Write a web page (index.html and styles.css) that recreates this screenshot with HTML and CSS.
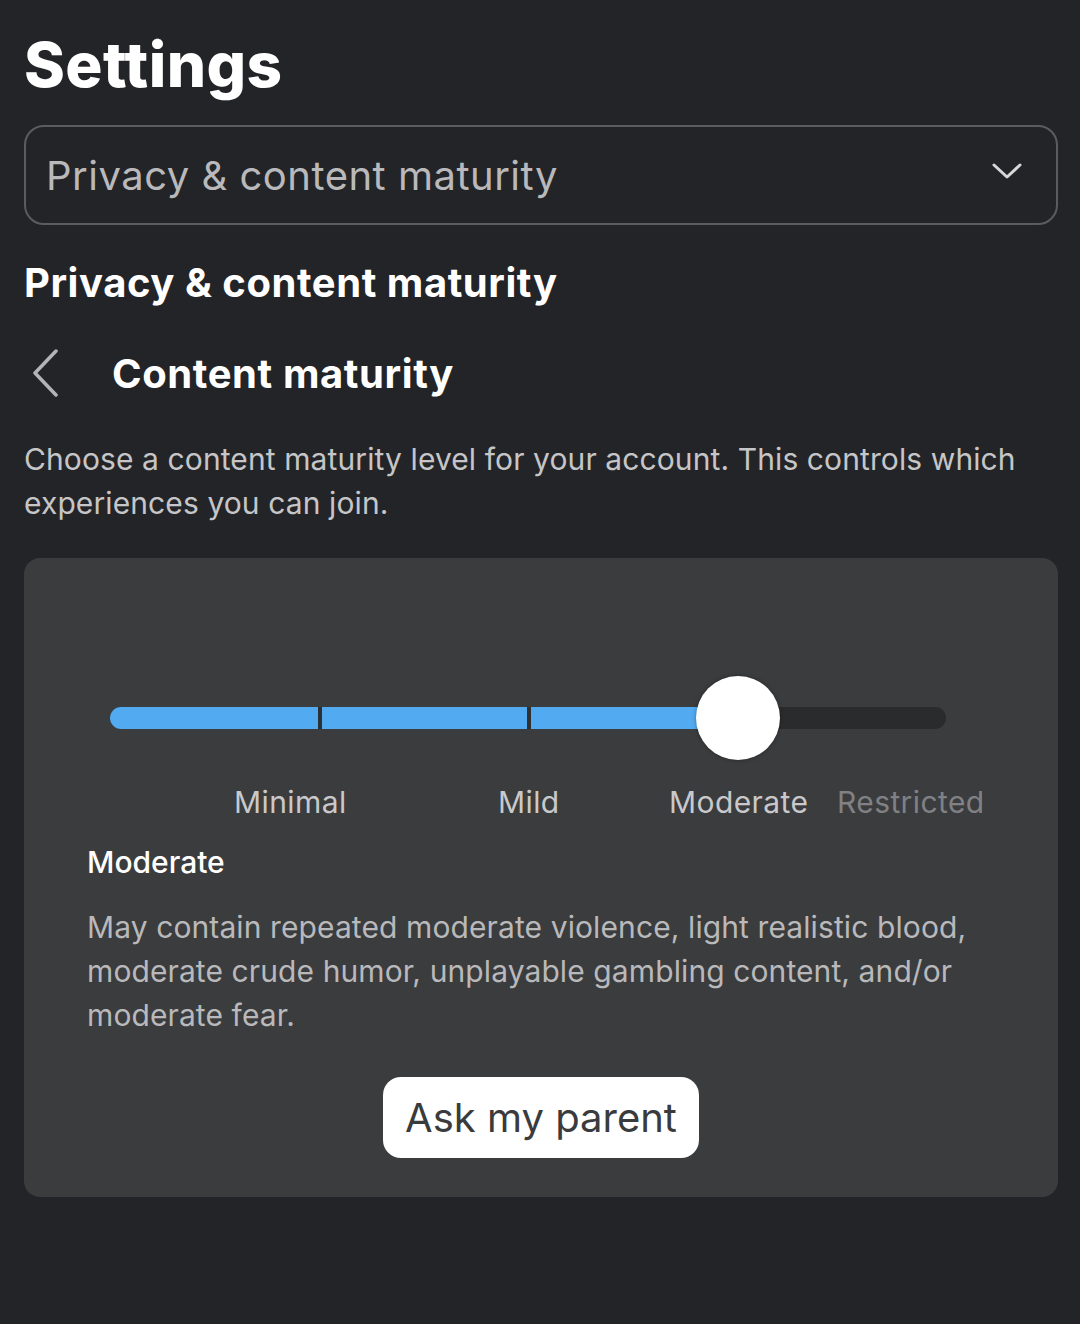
FILE: index.html
```html
<!DOCTYPE html>
<html lang="en">
<head>
  <meta charset="UTF-8">
  <meta name="viewport" content="width=device-width, initial-scale=1.0">
  <title>Settings</title>
  <link rel="stylesheet" href="styles.css">
</head>
<body>
  <div class="page">
    <h1 class="title">Settings</h1>

    <!-- Section picker -->
    <div class="picker">
      <span class="picker-text">Privacy &amp; content maturity</span>
      <svg class="picker-arrow" width="30" height="18" viewBox="0 0 30 18">
        <path d="M2 3 L15 15 L28 3" fill="none" stroke="#d8d8d8" stroke-width="3" stroke-linecap="round" stroke-linejoin="round"/>
      </svg>
    </div>

    <h2 class="section-title">Privacy &amp; content maturity</h2>

    <div class="subheader">
      <svg class="back" width="30" height="48" viewBox="0 0 30 48">
        <path d="M26 2 L5 24 L26 46" fill="none" stroke="#b4b4b6" stroke-width="3.5" stroke-linecap="round" stroke-linejoin="round"/>
      </svg>
      <h3 class="subheader-title">Content maturity</h3>
    </div>

    <p class="intro">Choose a content maturity level for your account. This controls which experiences you can join.</p>

    <!-- Maturity level card -->
    <div class="card">
      <div class="slider">
        <div class="track">
          <div class="fill"></div>
          <span class="tick" style="left: 208px"></span>
          <span class="tick" style="left: 417px"></span>
          <span class="thumb" style="left: 628px"></span>
        </div>
        <div class="labels">
          <span class="label" style="left: 124px">Minimal</span>
          <span class="label" style="left: 388px">Mild</span>
          <span class="label" style="left: 559px">Moderate</span>
          <span class="label muted" style="left: 727px">Restricted</span>
        </div>
      </div>

      <h4 class="level-name">Moderate</h4>
      <p class="level-desc">May contain repeated moderate violence, light realistic blood, moderate crude humor, unplayable gambling content, and/or moderate fear.</p>

      <div class="actions">
        <button class="ask-btn">Ask my parent</button>
      </div>
    </div>
  </div>
</body>
</html>
```

FILE: styles.css
```css
body {
  margin: 0;
  background-color: #232427;
  font-family: Inter, "Noto Sans", sans-serif;
  color: #ffffff;
}

.page {
  padding: 0 22px 0 24px;
}

.title {
  margin: 0;
  padding-top: 27px;
  font-size: 62px;
  font-weight: 800;
  line-height: 76px;
  letter-spacing: 0.4px;
}

.picker {
  margin-top: 22px;
  height: 96px;
  border: 2px solid #5b5c60;
  border-radius: 20px;
  display: flex;
  align-items: center;
  justify-content: space-between;
  padding: 0 34px 0 20px;
}

.picker-text {
  font-size: 40px;
  color: #b9b9bb;
  letter-spacing: 0.5px;
}

.picker-arrow {
  margin-top: -8px;
}

.section-title {
  margin: 32px 0 0;
  font-size: 40px;
  font-weight: 700;
  line-height: 52px;
  letter-spacing: 0.55px;
}

.subheader {
  display: flex;
  align-items: center;
  margin-top: 40px;
  height: 48px;
}

.back {
  margin-left: 6px;
}

.subheader-title {
  margin: 0 0 0 52px;
  font-size: 40px;
  font-weight: 700;
  letter-spacing: 0.6px;
}

.intro {
  margin: 40px 0 0;
  font-size: 30px;
  line-height: 44px;
  color: #c6c6c8;
  letter-spacing: 0.1px;
}

.card {
  margin-top: 33px;
  background-color: #3b3c3e;
  border-radius: 16px;
  padding: 118px 63px 39px;
}

.slider {
  position: relative;
  margin-left: 23px;
  width: 836px;
}

.track {
  position: relative;
  margin-top: 31px;
  height: 22px;
  border-radius: 11px;
  background-color: #2a2b2d;
}

.fill {
  width: 640px;
  height: 100%;
  border-radius: 11px 0 0 11px;
  background-color: #52aaf1;
}

.tick {
  position: absolute;
  top: 0;
  width: 4px;
  height: 100%;
  background-color: #2f3033;
}

.thumb {
  position: absolute;
  top: -31px;
  width: 84px;
  height: 84px;
  margin-left: -42px;
  border-radius: 50%;
  background-color: #ffffff;
  box-shadow: 0 0 4px rgba(0, 0, 0, 0.35);
}

.labels {
  position: relative;
  height: 44px;
  margin-top: 51px;
}

.label {
  position: absolute;
  top: 0;
  font-size: 30px;
  line-height: 44px;
  color: #c9c9cb;
  white-space: nowrap;
  letter-spacing: 0.4px;
}

.label.muted {
  color: #808184;
}

.level-name {
  margin: 16px 0 0;
  font-size: 30px;
  font-weight: 500;
  line-height: 44px;
}

.level-desc {
  margin: 21px 0 0;
  font-size: 30px;
  line-height: 44px;
  color: #b9b9bb;
  letter-spacing: 0.1px;
}

.actions {
  display: flex;
  justify-content: center;
  margin-top: 40px;
}

.ask-btn {
  font-family: inherit;
  font-size: 40px;
  color: #3a3b3d;
  background-color: #ffffff;
  border: none;
  border-radius: 18px;
  padding: 0 22px;
  height: 81px;
}
```
